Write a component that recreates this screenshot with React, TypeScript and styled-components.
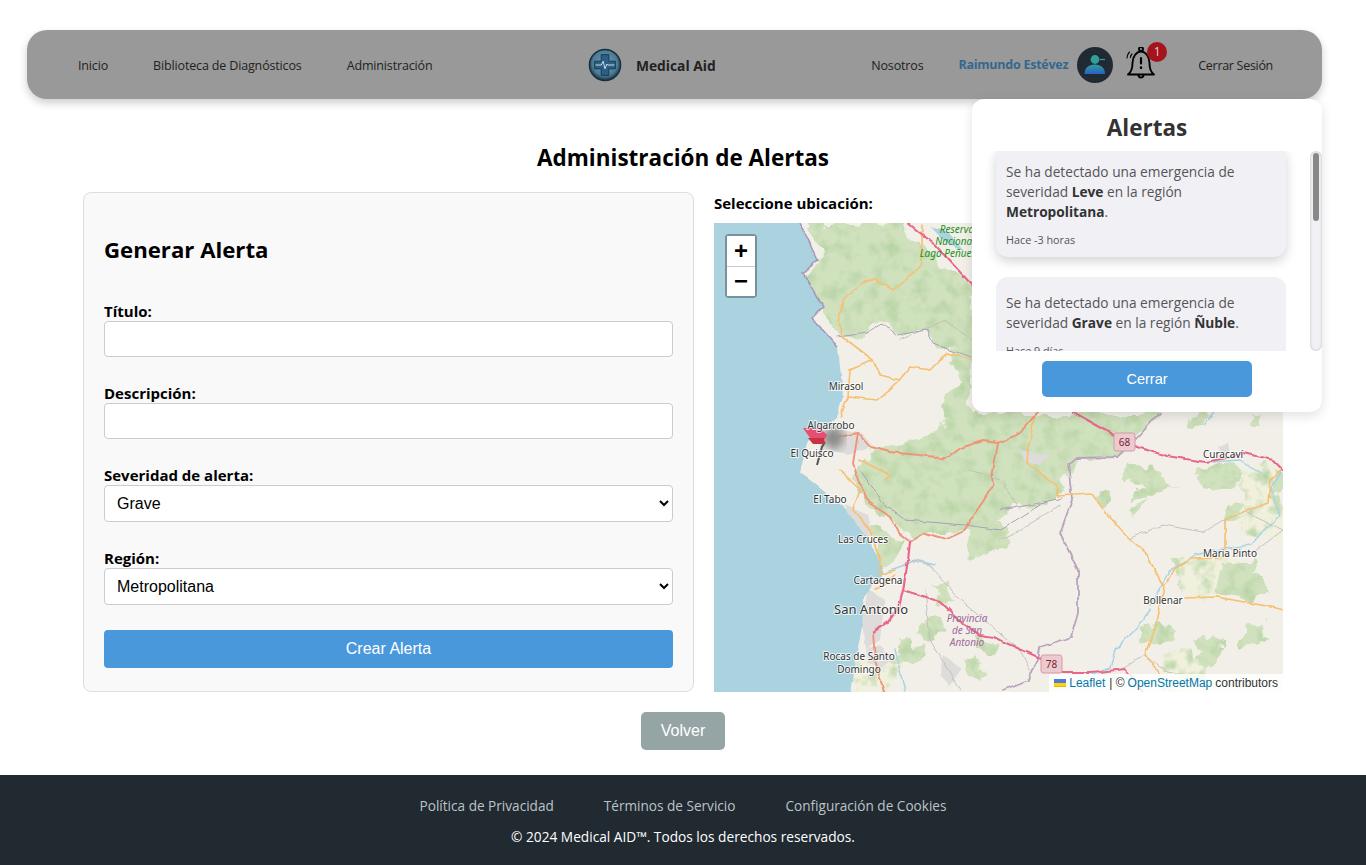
import React from "react";
import styled, { createGlobalStyle } from "styled-components";

const GlobalStyle = createGlobalStyle`
  * { box-sizing: border-box; }
  html, body { margin: 0; padding: 0; background: #fff; }
  body { font-family: "Open Sans", "Noto Sans", sans-serif; color: #000; }
`;

const Page = styled.div`
  position: relative;
  width: 1366px;
  height: 865px;
  display: flex;
  flex-direction: column;
  overflow: hidden;
`;

const Navbar = styled.header`
  width: 1295px;
  height: 69px;
  margin: 30px 0 0 27px;
  padding: 0 49px 0 51px;
  display: flex;
  align-items: center;
  justify-content: space-between;
  background: #999;
  border-radius: 20px;
  box-shadow: 0 4px 8px rgba(0, 0, 0, 0.2);
  flex-shrink: 0;
`;

const NavGroup = styled.nav`
  display: flex;
  align-items: center;
`;

const NavLink = styled.a<{ $gap?: number; $tight?: boolean }>`
  font-size: 12.5px;
  letter-spacing: ${(p) => (p.$tight ? "-0.3px" : "-0.15px")};
  padding-top: 2px;
  color: #222;
  margin-right: ${(p) => p.$gap ?? 0}px;
  white-space: nowrap;
`;

const Brand = styled.div`
  display: flex;
  align-items: center;
  gap: 14px;
`;

const BrandName = styled.span`
  padding-top: 2px;
  font-size: 13.8px;
  font-weight: 700;
  color: #222;
`;

const UserName = styled.span`
  font-size: 12.5px;
  font-weight: 700;
  letter-spacing: -0.25px;
  color: #33688f;
  margin-right: 9px;
  white-space: nowrap;
`;

const BellWrap = styled.div`
  position: relative;
  width: 34px;
  height: 36px;
  margin: 0 39px 0 12px;
`;

const Badge = styled.span`
  position: absolute;
  top: -5px;
  left: 22px;
  width: 20px;
  height: 20px;
  border-radius: 50%;
  background: #a3141c;
  color: #f4c9c9;
  font-size: 12px;
  display: flex;
  align-items: center;
  justify-content: center;
`;

const AlertsPanel = styled.aside`
  position: absolute;
  top: 99px;
  left: 972px;
  width: 350px;
  height: 313px;
  background: #fff;
  border-radius: 12px;
  box-shadow: 0 4px 12px rgba(0, 0, 0, 0.12);
  display: flex;
  flex-direction: column;
  align-items: center;
  z-index: 5;
`;

const PanelTitle = styled.h2`
  margin: 13px 0 0;
  height: 39px;
  font-size: 22.5px;
  line-height: 32px;
  font-weight: 700;
  color: #333;
`;

const AlertScroller = styled.div`
  width: 100%;
  height: 200px;
  display: flex;
`;

const AlertViewport = styled.div`
  flex: 1;
  padding: 0 24px;
  overflow: hidden;
`;

const AlertRail = styled.div`
  width: 12px;
  padding: 2px 3px;
  border-radius: 6px;
  background: #f0f0f5;
  box-shadow: inset 0 0 3px rgba(0, 0, 0, 0.2);
`;

const AlertThumb = styled.div`
  height: 68px;
  border-radius: 3px;
  background: #888;
`;

const AlertCard = styled.div<{ $raised?: boolean }>`
  background: #f0f0f5;
  border-radius: 12px;
  padding: 16px 10px 9px;
  margin-top: ${(p) => (p.$raised ? "-5px" : "0")};
  margin-bottom: 20px;
  box-shadow: ${(p) => (p.$raised ? "0 4px 12px rgba(0, 0, 0, 0.18)" : "none")};
`;

const AlertText = styled.p`
  margin: 0 0 10px;
  font-size: 13.7px;
  line-height: 20px;
  color: #555;

  strong { color: #333; font-weight: 700; }
`;

const AlertTime = styled.small`
  display: block;
  font-size: 10.8px;
  line-height: 16px;
  color: #555;
`;

const CloseButton = styled.button`
  width: 210px;
  height: 36px;
  margin-top: 10px;
  border: none;
  border-radius: 5px;
  background: #4a98dc;
  color: #fff;
  font: 14.5px "Liberation Sans", Arial, sans-serif;
`;

const Main = styled.main`
  flex: 1;
  display: flex;
  flex-direction: column;
  align-items: center;
`;

const PageTitle = styled.h1`
  margin: 44px 0 0;
  height: 49px;
  width: 100%;
  text-align: center;
  font-size: 22.5px;
  line-height: 29px;
  font-weight: 700;
  color: #000;
`;

const Columns = styled.div`
  width: 100%;
  padding: 0 83px;
  display: flex;
  gap: 20px;
`;

const FormCard = styled.form`
  width: 611px;
  height: 500px;
  padding: 40px 20px 0;
  background: #f9f9f9;
  border: 1px solid #ddd;
  border-radius: 8px;
`;

const FormTitle = styled.h2`
  margin: 0 0 38px;
  font-size: 22.2px;
  line-height: 34px;
  font-weight: 700;
`;

const Field = styled.div`
  margin-bottom: 30px;

  &:last-of-type { margin-bottom: 25px; }
`;

const FieldLabel = styled.label`
  display: block;
  height: 16px;
  font-size: 15px;
  line-height: 12px;
  font-weight: 700;
`;

const TextInput = styled.input`
  display: block;
  width: 100%;
  height: 36px;
  border: 1px solid #ccc;
  border-radius: 4px;
  background: #fff;
`;

const SelectInput = styled.select`
  display: block;
  width: 100%;
  height: 37px;
  padding: 8px;
  border: 1px solid #ccc;
  border-radius: 4px;
  background: #fff;
  color: #000;
  font: 16px "Liberation Sans", Arial, sans-serif;
`;

const SubmitButton = styled.button`
  display: block;
  width: 100%;
  height: 38px;
  border: none;
  border-radius: 4px;
  background: #4a98dc;
  color: #fff;
  font: 16px "Liberation Sans", Arial, sans-serif;
`;

const MapColumn = styled.section`
  width: 569px;
`;

const MapLabel = styled.div`
  height: 31px;
  font-size: 15px;
  line-height: 22px;
  font-weight: 700;
`;

const MapFrame = styled.div`
  position: relative;
  width: 569px;
  height: 469px;
  overflow: hidden;
  background: #f2efe9;

  svg { display: block; }
`;

const ZoomBox = styled.div`
  position: absolute;
  top: 11px;
  left: 11px;
  width: 32px;
  height: 64px;
  border: 2px solid rgba(0, 0, 0, 0.3);
  border-radius: 4px;
  background-clip: padding-box;
  display: flex;
  flex-direction: column;
`;

const ZoomBtn = styled.span`
  flex: 1;
  display: flex;
  align-items: center;
  justify-content: center;
  background: #fff;
  color: #000;
  font: 700 24px "Liberation Sans", Arial, sans-serif;
  & + & { border-top: 1px solid #ccc; }
`;

const Attribution = styled.div`
  position: absolute;
  right: 0;
  bottom: 0;
  height: 18px;
  padding: 0 5px;
  display: flex;
  align-items: center;
  gap: 3px;
  background: rgba(255, 255, 255, 0.85);
  font: 12px "Liberation Sans", Arial, sans-serif;
  color: #333;

  a { color: #0078a8; }
  a:first-of-type { margin-right: 1px; }
`;

const BackButton = styled.button`
  width: 84px;
  height: 38px;
  margin-top: 20px;
  border: none;
  border-radius: 5px;
  background: #95a5a6;
  color: #fff;
  font: 16px "Liberation Sans", Arial, sans-serif;
`;

const Footer = styled.footer`
  height: 90px;
  flex-shrink: 0;
  background: #212931;
  display: flex;
  flex-direction: column;
  align-items: center;
  padding-top: 21px;
`;

const FooterLinks = styled.div`
  display: flex;
  gap: 50px;
  font-size: 13.6px;
  line-height: 20px;
  color: #bdc3c7;
`;

const Copyright = styled.p`
  margin: 11px 0 0;
  font-size: 13.7px;
  line-height: 20px;
  color: #fff;
`;

const Logo = () => (
  <svg width="34" height="36" viewBox="0 0 36 38">
    <defs>
      <radialGradient id="lg" cx="50%" cy="45%" r="55%">
        <stop offset="0%" stopColor="#6f9db3" />
        <stop offset="72%" stopColor="#4d7c94" />
        <stop offset="100%" stopColor="#12303f" />
      </radialGradient>
    </defs>
    <circle cx="18" cy="19" r="16.5" fill="url(#lg)" stroke="#14303f" strokeWidth="1.5" />
    <path d="M14 8h8v7h7v8h-7v7h-8v-7H7v-8h7z" fill="#2c5f85" stroke="#173a52" strokeWidth="1" />
    <path d="M8 19h6l2-4 2 8 2-5 1 1h7" fill="none" stroke="#cfe3ee" strokeWidth="1" />
  </svg>
);

const Avatar = () => (
  <svg width="36" height="36" viewBox="0 0 36 36">
    <defs>
      <linearGradient id="ag" x1="0" y1="0" x2="0" y2="1">
        <stop offset="0%" stopColor="#2f9f9a" />
        <stop offset="100%" stopColor="#2a5fc4" />
      </linearGradient>
    </defs>
    <circle cx="18" cy="18" r="18" fill="#212a33" />
    <circle cx="18" cy="12.5" r="4.4" fill="#2f9f9a" />
    <path d="M7.5 27c0-6 4-9.5 10.2-9.5S28 21 28 27z" fill="url(#ag)" />
    <path d="M23 12.5h5" stroke="#2f9f9a" strokeWidth="1.2" />
  </svg>
);

const Bell = () => (
  <svg width="34" height="36" viewBox="0 2.5 34 36" fill="none" stroke="#000" strokeWidth="1.9" strokeLinecap="round" strokeLinejoin="round">
    <circle cx="16" cy="4.6" r="2" />
    <path d="M3 30c3.500-2.500 4.500-5.500 4.500-11.500 0-6 3.800-11.500 8.500-11.500s8.500 5.500 8.500 11.500c0 6 1 9 4.500 11.500z" />
    <path d="M13.500 30.500a2.500 2.500 0 0 0 5 0" />
    <path d="M16 13.500v5.500" strokeWidth="2.200" />
    <path d="M16 23v.4" strokeWidth="2.400" />
    <path d="M4.500 7.500c-1.500 1.500-2.500 3.500-2.500 6" strokeWidth="1.100" />
    <path d="M7 9.500c-1 1-1.500 2.200-1.500 3.500" strokeWidth="1.100" />
  </svg>
);

const forests = [
  "M812 223L905 223L925 250L972 290L972 352L950 350L933 343L927 330L897 335L883 323L867 333L838 337L823 307L812 300L806 276L820 258Z",
  "M972 350L950 352L960 380L940 400L945 425L900 445L870 448L860 470L850 480L870 505L890 520L905 535L925 530L945 537L965 530L985 525L1000 518L1030 505L1062 498L1070 465L1078 458L1117 457L1135 440L1160 412L972 412Z",
  "M965 523L1000 520L1012 545L985 560L970 552Z",
  "M1125 465L1150 462L1165 480L1178 486L1150 495L1130 498L1140 485L1123 475Z",
  "M1128 510L1150 497L1145 508L1130 518Z",
  "M1197 470L1240 460L1238 488L1205 492Z",
  "M1275 465L1283 470L1283 498L1272 498Z",
  "M1228 505L1240 502L1243 512L1230 516Z",
  "M932 583L945 582L955 600L940 606Z",
  "M925 618L938 612L945 632L930 640L920 630Z",
  "M976 632L1000 645L988 655L975 648Z",
  "M970 660L985 668L980 680L968 672Z",
  "M1217 565L1250 560L1268 590L1245 600L1220 590Z",
  "M1240 628L1265 622L1262 645L1240 648Z",
  "M1140 620L1170 625L1175 640L1155 645L1138 635Z",
  "M1195 640L1215 630L1225 650L1200 665Z",
  "M1098 493L1110 490L1115 500L1098 505Z",
  "M1193 410L1210 412L1205 430L1190 428Z",
  "M1250 410L1262 412L1258 425L1248 422Z",
  "M900 645L925 640L915 660L895 665Z",
  "M875 575L895 560L905 540L880 530L860 520L875 545Z",
];

const lightPatches = [
  "M850 660L880 655L905 665L885 692L855 692Z",
  "M1170 650L1200 660L1215 692L1160 692Z",
  "M1240 470L1280 460L1283 540L1240 530Z",
  "M1170 560L1240 558L1230 590L1190 600Z",
];

const urban = [
  "M832 428L860 432L872 445L848 455L832 448Z",
  "M845 505L868 515L872 535L858 545Z",
  "M868 590L885 600L880 640L865 650L862 620Z",
  "M866 650L880 645L895 660L880 668L868 662Z",
  "M943 655L962 668L950 685L940 675Z",
  "M1020 450L1050 455L1040 465L1025 462Z",
  "M1218 447L1228 443L1230 452L1220 455Z",
];

const highways = [
  "M908 223L935 245L972 285",
  "M1073 412L1118 437L1137 447L1167 456L1205 462L1227 458L1243 453L1273 460L1283 470",
  "M910 542L908 560L903 590L899 607L888 622L873 632",
  "M903 590L941 602L962 623L980 635L995 637L1006 643L1038 657L1062 673L1091 673L1125 669L1132 677L1143 692",
];

const trunks = [
  "M838 437L858 433L870 447L890 452L937 457L943 460L960 448L983 441L998 443L1020 433L1037 413",
  "M998 443L992 477L993 485L984 500L962 532L947 539L925 533L910 542L899 533L891 517L869 503L858 480L853 463L858 433",
  "M873 632L875 660L884 692",
];

const secondary = [
  "M922 225L922 250L920 267L893 290L875 278L863 283L843 300L838 323L843 337L873 360L850 370L848 397L840 417",
  "M848 397L877 400L897 383L910 367L930 370L947 353L972 360",
  "M1035 413L1028 450L1027 463L1057 487L1057 496L1092 494L1106 513L1129 538L1145 552L1164 587L1156 627L1145 653L1160 675",
  "M1164 587L1173 570L1191 558L1225 557L1225 519L1243 512L1268 503L1270 480L1283 470",
  "M1184 598L1217 597L1277 608L1283 610",
  "M873 360L880 375L900 380",
  "M840 470L860 490L853 510L870 530L880 560L880 575L895 570",
  "M875 590L895 575",
  "M860 460L890 475L885 480",
];

const minor = [
  "M1130 538L1163 525L1203 532L1225 519L1243 512",
  "M910 560L930 565L960 600L1020 650L1030 670",
  "M1000 540L1020 530L1060 505",
  "M1245 512L1283 530",
  "M1225 557L1250 555L1283 530",
  "M925 590L930 640L960 690",
  "M1120 670L1145 655L1165 670L1200 680",
  "M900 340L945 320L972 340",
  "M970 470L1000 480L1020 510",
];

const water = [
  "M1150 605L1170 570L1195 555L1230 548L1250 545L1280 515L1270 490L1283 470",
  "M1080 680L1110 668L1115 650L1135 630L1150 610",
  "M1205 425L1215 410",
  "M1213 462L1240 460L1265 475",
  "M890 570L905 565L915 560L935 565",
  "M895 650L905 692",
];

const boundaries = [
  "M1117 457L1077 458L1068 463L1072 500L1060 533L1078 570L1078 613L1071 637L1040 647L1038 660L1028 680L1003 690",
  "M1117 457L1135 440L1160 413",
];

const boundaryThin = [
  "M838 337L867 333L883 323L897 335L927 330L933 343L950 350L972 357",
  "M1000 510L1030 505L1062 498",
  "M860 470L885 505L905 520L965 525L1000 530L1040 505",
];

const coast = "M690 200L800 200L800 223L818 260L803 273L823 307L812 318L838 347L843 397L837 417L807 443L800 473L810 480L847 510L873 547L884 573L864 597L862 627L858 647L851 692L848 715L690 715Z";

const places: [string, number, number, number?][] = [
  ["Mirasol", 846, 386],
  ["Algarrobo", 831, 425],
  ["El Quisco", 812, 453],
  ["El Tabo", 830, 499],
  ["Las Cruces", 863, 539],
  ["Cartagena", 878, 580],
  ["San Antonio", 871, 610, 13],
  ["Rocas de Santo", 859, 656],
  ["Domingo", 859, 669],
  ["Curacaví", 1223, 454],
  ["Maria Pinto", 1230, 553],
  ["Bollenar", 1163, 600],
];

const MapLines = styled.path<{ $color: string; $w: number }>`
  fill: none;
  stroke: ${(p) => p.$color};
  stroke-width: ${(p) => p.$w}px;
  stroke-linejoin: round;
  stroke-linecap: round;
`;

const PlaceName = styled.text`
  font-family: "Noto Sans", "Open Sans", sans-serif;
  fill: #333;
  stroke: rgba(255, 255, 255, 0.75);
  stroke-width: 2px;
  paint-order: stroke;
  text-anchor: middle;
`;

const ItalicName = styled.text<{ $color: string }>`
  font-family: "Noto Sans", "Open Sans", sans-serif;
  font-style: italic;
  font-size: 10px;
  fill: ${(p) => p.$color};
  text-anchor: middle;
`;

const ShieldText = styled.text`
  font-family: "Noto Sans", "Open Sans", sans-serif;
  font-size: 10px;
  fill: #7a1f33;
  text-anchor: middle;
`;

const Shield = ({ x, y, n }: { x: number; y: number; n: string }) => (
  <g>
    <rect x={x} y={y} width="21" height="18" rx="2.5" fill="#eccad0" stroke="#d59aa8" />
    <ShieldText x={x + 10.5} y={y + 13}>{n}</ShieldText>
  </g>
);

const MapDrawing = () => (
  <svg width="569" height="469" viewBox="714 223 569 469">
    <defs>
      <filter id="organic" x="-5%" y="-5%" width="110%" height="110%" colorInterpolationFilters="sRGB">
        <feTurbulence type="fractalNoise" baseFrequency="0.045" numOctaves="4" seed="7" result="n" />
        <feDisplacementMap in="SourceGraphic" in2="n" scale="24" xChannelSelector="R" yChannelSelector="G" result="d" />
        <feGaussianBlur in="d" stdDeviation="0.7" result="soft" />
        <feTurbulence type="fractalNoise" baseFrequency="0.07" numOctaves="3" seed="3" />
        <feColorMatrix values="0 0 0 0 0.72 0 0 0 0 0.83 0 0 0 0 0.65 2.4 0 0 0 -1.1" result="m" />
        <feComposite in="m" in2="soft" operator="in" result="mottle" />
        <feMerge>
          <feMergeNode in="soft" />
          <feMergeNode in="mottle" />
        </feMerge>
      </filter>
      <filter id="wiggle" x="-5%" y="-5%" width="110%" height="110%" colorInterpolationFilters="sRGB">
        <feTurbulence type="fractalNoise" baseFrequency="0.09" numOctaves="2" seed="11" result="n" />
        <feDisplacementMap in="SourceGraphic" in2="n" scale="4" xChannelSelector="R" yChannelSelector="G" result="d" />
        <feGaussianBlur in="d" stdDeviation="0.35" />
      </filter>
      <filter id="blob"><feGaussianBlur stdDeviation="4.5" /></filter>
      <filter id="stem"><feGaussianBlur stdDeviation="0.5" /></filter>
    </defs>
    <rect x="714" y="223" width="569" height="469" fill="#f2efe9" />
    <g filter="url(#organic)">
      {lightPatches.map((d) => <path key={d} d={d} fill="#f0f0dc" />)}
      {forests.map((d) => <path key={d} d={d} fill="#d0e1bd" />)}
    </g>
    <g filter="url(#wiggle)">
      {urban.map((d) => <path key={d} d={d} fill="#dedcda" />)}
      {water.map((d) => <MapLines key={d} d={d} $color="#a6d3e6" $w={1.4} />)}
      {minor.map((d) => <MapLines key={d} d={d} $color="#c0bdb9" $w={0.9} />)}
      <path d={coast} fill="#aad3df" />
      <path d="M800 223L818 260L803 273L823 307L812 318L838 347" fill="none" stroke="#a595b8" strokeWidth="1.5" />
      <path d="M930 226L945 230L965 252L945 242Z" fill="#aad3df" />
      {boundaryThin.map((d) => <MapLines key={d} d={d} $color="#a9a0b8" $w={1} />)}
      {boundaries.map((d) => <MapLines key={d} d={d} $color="#b9a4bd" $w={1.8} />)}
      {secondary.map((d) => <MapLines key={d} d={d} $color="#f7bf70" $w={1.6} />)}
      {trunks.map((d) => <MapLines key={d} d={d} $color="#f09478" $w={1.9} />)}
      {highways.map((d) => <MapLines key={d} d={d} $color="#e8688a" $w={2.2} />)}
    </g>
    <circle cx="833" cy="438" r="11" fill="#8c8c8c" filter="url(#blob)" />
    <path d="M825 442L822 447L817 465" fill="none" stroke="#555" strokeWidth="2" filter="url(#stem)" />
    <path d="M803 428L820 428L827 435L825 439L810 438Z" fill="#e84e72" />
    <path d="M808 438L824 438L825 444L813 444Z" fill="#c93242" />
    {places.map(([name, x, y, size]) => (
      <PlaceName key={name} x={x} y={y + 3.5} fontSize={size ?? 10}>{name}</PlaceName>
    ))}
    <ItalicName $color="#1f8f1f" x="957" y="233">Reservá</ItalicName>
    <ItalicName $color="#1f8f1f" x="955" y="245">Nacional</ItalicName>
    <ItalicName $color="#1f8f1f" x="947" y="257">Lago Peñuel</ItalicName>
    <ItalicName $color="#a06a9c" x="967" y="622">Provincia</ItalicName>
    <ItalicName $color="#a06a9c" x="967" y="634">de San</ItalicName>
    <ItalicName $color="#a06a9c" x="967" y="646">Antonio</ItalicName>
    <Shield x={1114} y={433} n="68" />
    <Shield x={1041} y={655} n="78" />
  </svg>
);

const Flag = () => (
  <svg width="12" height="8" viewBox="0 0 12 8">
    <path d="M0 0h12v4H0z" fill="#4c7be1" />
    <path d="M0 4h12v3H0z" fill="#ffd500" />
    <path d="M0 7h12v1H0z" fill="#e0bc00" />
  </svg>
);

export default function App() {
  return (
    <Page>
      <GlobalStyle />
      <Navbar>
        <NavGroup>
          <NavLink $gap={45}>Inicio</NavLink>
          <NavLink $gap={45}>Biblioteca de Diagnósticos</NavLink>
          <NavLink>Administración</NavLink>
        </NavGroup>
        <Brand>
          <Logo />
          <BrandName>Medical Aid</BrandName>
        </Brand>
        <NavGroup>
          <NavLink $gap={35}>Nosotros</NavLink>
          <UserName>Raimundo Estévez</UserName>
          <Avatar />
          <BellWrap>
            <Bell />
            <Badge>1</Badge>
          </BellWrap>
          <NavLink $tight>Cerrar Sesión</NavLink>
        </NavGroup>
      </Navbar>

      <AlertsPanel>
        <PanelTitle>Alertas</PanelTitle>
        <AlertScroller>
          <AlertViewport>
            <AlertCard $raised>
              <AlertText>
                Se ha detectado una emergencia de severidad <strong>Leve</strong> en la región <strong>Metropolitana</strong>.
              </AlertText>
              <AlertTime>Hace -3 horas</AlertTime>
            </AlertCard>
            <AlertCard>
              <AlertText>
                Se ha detectado una emergencia de severidad <strong>Grave</strong> en la región <strong>Ñuble</strong>.
              </AlertText>
              <AlertTime>Hace 9 días</AlertTime>
            </AlertCard>
          </AlertViewport>
          <AlertRail>
            <AlertThumb />
          </AlertRail>
        </AlertScroller>
        <CloseButton type="button">Cerrar</CloseButton>
      </AlertsPanel>

      <Main>
        <PageTitle>Administración de Alertas</PageTitle>
        <Columns>
          <FormCard>
            <FormTitle>Generar Alerta</FormTitle>
            <Field>
              <FieldLabel>Título:</FieldLabel>
              <TextInput type="text" />
            </Field>
            <Field>
              <FieldLabel>Descripción:</FieldLabel>
              <TextInput type="text" />
            </Field>
            <Field>
              <FieldLabel>Severidad de alerta:</FieldLabel>
              <SelectInput defaultValue="Grave">
                <option>Leve</option>
                <option>Moderada</option>
                <option>Grave</option>
              </SelectInput>
            </Field>
            <Field>
              <FieldLabel>Región:</FieldLabel>
              <SelectInput defaultValue="Metropolitana">
                <option>Metropolitana</option>
                <option>Ñuble</option>
              </SelectInput>
            </Field>
            <SubmitButton type="button">Crear Alerta</SubmitButton>
          </FormCard>
          <MapColumn>
            <MapLabel>Seleccione ubicación:</MapLabel>
            <MapFrame>
              <MapDrawing />
              <ZoomBox>
                <ZoomBtn>+</ZoomBtn>
                <ZoomBtn>−</ZoomBtn>
              </ZoomBox>
              <Attribution>
                <Flag />
                <a>Leaflet</a> | © <a>OpenStreetMap</a> contributors
              </Attribution>
            </MapFrame>
          </MapColumn>
        </Columns>
        <BackButton type="button">Volver</BackButton>
      </Main>

      <Footer>
        <FooterLinks>
          <span>Política de Privacidad</span>
          <span>Términos de Servicio</span>
          <span>Configuración de Cookies</span>
        </FooterLinks>
        <Copyright>© 2024 Medical AID™. Todos los derechos reservados.</Copyright>
      </Footer>
    </Page>
  );
}
